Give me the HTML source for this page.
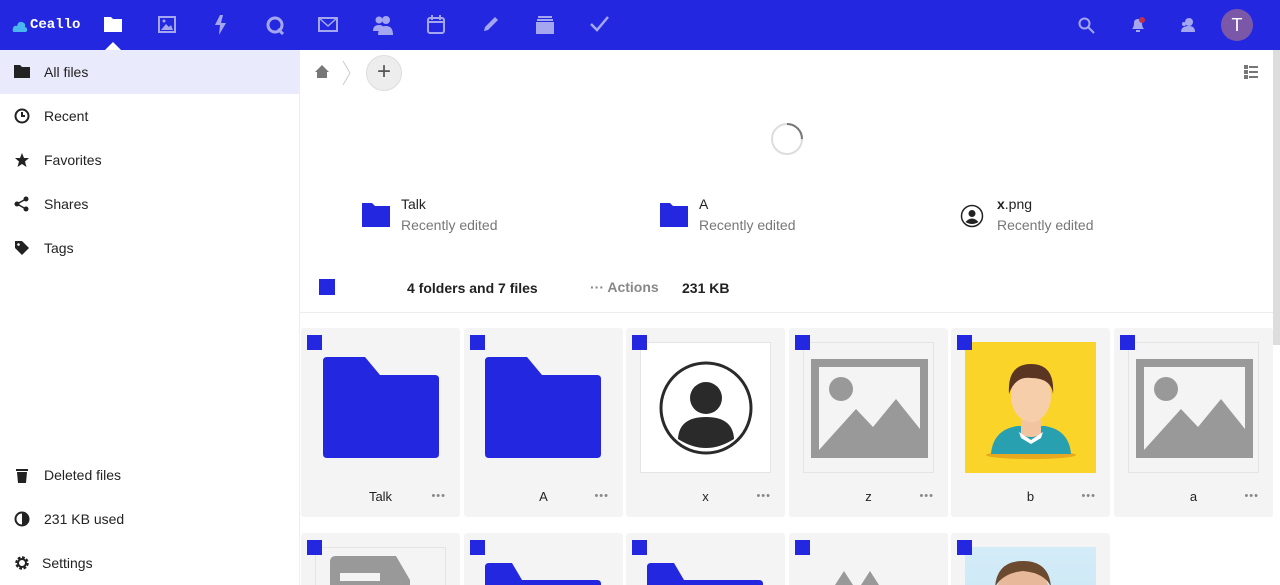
<!DOCTYPE html>
<html style="height:585px;overflow:hidden"><head><meta charset="utf-8"><style>
*{box-sizing:border-box;margin:0;padding:0}
body{width:1280px;height:585px;overflow:hidden;font-family:"Liberation Sans",sans-serif;background:#fff;position:relative;color:#222}
.top{position:absolute;left:0;top:0;width:1280px;height:50px;background:#2328e0}
.abs{position:absolute}
.side{position:absolute;left:0;top:50px;width:300px;height:535px;border-right:1px solid #ededed;background:#fff}
.item{position:absolute;left:0;width:299px;height:44px;font-size:14px;color:#222;display:flex;align-items:center;padding-left:44px}
.item svg{position:absolute;left:14px;top:14px}
.card{position:absolute;width:159px;height:189px;background:#f4f4f4;border-radius:3px}
.chk{position:absolute;left:6px;top:7px;width:15px;height:15px;background:#2328e0;z-index:5}
.name{position:absolute;left:0;width:159px;top:161px;text-align:center;font-size:13px;color:#222}
.dots{position:absolute;right:14px;top:166px;font-size:11px;color:#888;letter-spacing:1px;line-height:4px}
.thumb{position:absolute;left:14px;top:14px;width:131px;height:131px;border:1px solid #e4e4e4;background:#fff}
.grey{color:#777}
</style></head><body>
<div class="top">
  <svg class="abs" style="left:12px;top:19px" width="16" height="14"><path d="M2 13 Q0 13 1 9 Q2 6 5 7 Q6 2 10 3 Q14 4 13 8 Q16 9 15 12 L14 13Z" fill="#4ab6f0"/></svg>
  <div class="abs" style="left:30px;top:17px;color:#fff;font-family:'Liberation Mono',monospace;font-size:14px;font-weight:bold">Ceallo</div>
  <svg class="abs" style="left:104px;top:17px" width="18" height="15"><path d="M0 0H7L9 2H18V15H0Z" fill="#fff"/></svg>
  <div class="abs" style="left:105px;top:42px;width:0;height:0;border-left:8px solid transparent;border-right:8px solid transparent;border-bottom:8px solid #fff"></div>
  <svg class="abs" style="left:158px;top:16px" width="18" height="17"><rect x="1" y="1" width="16" height="15" fill="none" stroke="#a4a7f0" stroke-width="2"/><path d="M3 14 L8 8 L11 11 L13 9 L15 14Z" fill="#a4a7f0"/><circle cx="6" cy="5" r="1.5" fill="#a4a7f0"/></svg>
  <svg class="abs" style="left:214px;top:15px" width="14" height="20"><path d="M6 0 L1 10 H6 L5 20 L12 8 H7 L9 0Z" fill="#a4a7f0"/></svg>
  <svg class="abs" style="left:265px;top:15px" width="20" height="20"><circle cx="10" cy="10" r="7" fill="none" stroke="#a4a7f0" stroke-width="3"/><path d="M13 14 L18 19" stroke="#a4a7f0" stroke-width="3"/></svg>
  <svg class="abs" style="left:318px;top:17px" width="20" height="15"><rect x="1" y="1" width="18" height="13" fill="none" stroke="#a4a7f0" stroke-width="2"/><path d="M1 1 L10 9 L19 1" fill="none" stroke="#a4a7f0" stroke-width="1.5"/></svg>
  <svg class="abs" style="left:372px;top:15px" width="22" height="20"><circle cx="7" cy="5" r="3.5" fill="#a4a7f0"/><circle cx="14" cy="5" r="4" fill="#a4a7f0"/><path d="M1 16 Q1 10 7 10 Q13 10 13 16Z M6 20 Q6 11 14 11 Q21 11 21 20Z" fill="#a4a7f0"/></svg>
  <svg class="abs" style="left:427px;top:15px" width="18" height="19"><rect x="1" y="3" width="16" height="15" rx="2" fill="none" stroke="#a4a7f0" stroke-width="2"/><path d="M1 7H17" stroke="#a4a7f0" stroke-width="2"/><path d="M5 0V5M13 0V5" stroke="#a4a7f0" stroke-width="2"/></svg>
  <svg class="abs" style="left:483px;top:16px" width="16" height="16"><path d="M1 15 L2 11 L12 1 L15 4 L5 14Z" fill="#a4a7f0"/></svg>
  <svg class="abs" style="left:536px;top:15px" width="18" height="19"><rect x="0" y="7" width="18" height="12" fill="#a4a7f0"/><rect x="1" y="4" width="16" height="2" fill="#a4a7f0"/><rect x="2" y="1" width="14" height="2" fill="#a4a7f0"/></svg>
  <svg class="abs" style="left:590px;top:16px" width="19" height="16"><path d="M1 8 L7 14 L18 1" fill="none" stroke="#a4a7f0" stroke-width="2.5"/></svg>
  <svg class="abs" style="left:1078px;top:17px" width="17" height="17"><circle cx="6.5" cy="6.5" r="5" fill="none" stroke="#a4a7f0" stroke-width="2"/><path d="M10 10 L16 16" stroke="#a4a7f0" stroke-width="2"/></svg>
  <svg class="abs" style="left:1130px;top:17px" width="16" height="15"><path d="M2 12 Q4 10 4 6 Q4 2 8 2 Q12 2 12 6 Q12 10 14 12Z" fill="#a4a7f0"/><rect x="6" y="13" width="4" height="2" fill="#a4a7f0"/><circle cx="12" cy="3" r="3" fill="#c0304a"/></svg>
  <svg class="abs" style="left:1180px;top:17px" width="15" height="15"><circle cx="9" cy="5" r="4" fill="#a4a7f0"/><path d="M1 15 Q1 9 9 9 Q15 9 15 15Z" fill="#a4a7f0"/><circle cx="4" cy="7" r="2" fill="#a4a7f0"/></svg>
  <div class="abs" style="left:1221px;top:9px;width:32px;height:32px;border-radius:50%;background:#7b57a8;color:#fff;font-size:18px;text-align:center;line-height:32px">T</div>
</div>

<div class="side">
  <div class="item" style="top:0;background:#e9eafc"><svg width="16" height="14"><path d="M0 1H6L8 3H16V14H0Z" fill="#222"/></svg>All files</div>
  <div class="item" style="top:44px"><svg width="16" height="16"><circle cx="8" cy="8" r="6.5" fill="none" stroke="#222" stroke-width="2"/><path d="M8 4V8H11" fill="none" stroke="#222" stroke-width="2"/></svg>Recent</div>
  <div class="item" style="top:88px"><svg width="16" height="16"><path d="M8 1 L10 6 H15 L11 9.5 L12.5 15 L8 12 L3.5 15 L5 9.5 L1 6 H6Z" fill="#222"/></svg>Favorites</div>
  <div class="item" style="top:132px"><svg width="16" height="16"><circle cx="12" cy="3" r="2.5" fill="#222"/><circle cx="3" cy="8" r="2.5" fill="#222"/><circle cx="12" cy="13" r="2.5" fill="#222"/><path d="M12 3L3 8L12 13" fill="none" stroke="#222" stroke-width="1.5"/></svg>Shares</div>
  <div class="item" style="top:176px"><svg width="16" height="16"><path d="M1 1H8L15 8L8 15L1 8Z" fill="#222"/><circle cx="4.5" cy="4.5" r="1.3" fill="#fff"/></svg>Tags</div>
  <div class="item" style="top:403px"><svg width="16" height="16"><rect x="2" y="2" width="12" height="2" fill="#222"/><path d="M3 5H13L12 16H4Z" fill="#222"/></svg>Deleted files</div>
  <div class="item" style="top:447px"><svg width="16" height="16"><circle cx="8" cy="8" r="6.5" fill="none" stroke="#222" stroke-width="2"/><path d="M8 1.5A6.5 6.5 0 0 1 8 14.5Z" fill="#222"/></svg>231 KB used</div>
  <div class="item" style="top:491px;padding-left:42px"><svg width="16" height="16"><circle cx="8" cy="8" r="5" fill="none" stroke="#222" stroke-width="3.5" stroke-dasharray="2.5 1.4"/><circle cx="8" cy="8" r="4" fill="none" stroke="#222" stroke-width="2"/></svg>Settings</div>
</div>

<div class="abs" style="left:1273px;top:50px;width:7px;height:295px;background:#ddd"></div>
<svg class="abs" style="left:314px;top:64px" width="16" height="15"><path d="M8 1 L15 8 H13 V14 H3 V8 H1Z" fill="#777"/></svg>
<svg class="abs" style="left:342px;top:60px" width="10" height="26"><path d="M1 1 L8 13 L1 25" fill="none" stroke="#ccc" stroke-width="1"/></svg>
<div class="abs" style="left:366px;top:55px;width:36px;height:36px;border-radius:50%;background:#ededed;border:1px solid #ddd;text-align:center;line-height:32px;font-size:24px;color:#555">+</div>
<svg class="abs" style="left:1244px;top:65px" width="14" height="14"><rect x="0" y="0" width="4" height="4" fill="#777"/><rect x="0" y="5" width="4" height="4" fill="#777"/><rect x="0" y="10" width="4" height="4" fill="#777"/><rect x="5" y="1" width="9" height="2" fill="#777"/><rect x="5" y="6" width="9" height="2" fill="#777"/><rect x="5" y="11" width="9" height="2" fill="#777"/></svg>
<svg class="abs" style="left:770px;top:122px" width="34" height="34"><circle cx="17" cy="17" r="15" fill="none" stroke="#ddd" stroke-width="2"/><path d="M17 2 A15 15 0 0 1 32 17" fill="none" stroke="#777" stroke-width="2"/></svg>

<svg class="abs" style="left:362px;top:203px" width="28" height="24"><path d="M0 0H10L13 3H28V24H0Z" fill="#2328e0"/></svg>
<div class="abs" style="left:401px;top:196px;font-size:14px">Talk</div>
<div class="abs grey" style="left:401px;top:217px;font-size:14px">Recently edited</div>
<svg class="abs" style="left:660px;top:203px" width="28" height="24"><path d="M0 0H10L13 3H28V24H0Z" fill="#2328e0"/></svg>
<div class="abs" style="left:699px;top:196px;font-size:14px">A</div>
<div class="abs grey" style="left:699px;top:217px;font-size:14px">Recently edited</div>
<svg class="abs" style="left:960px;top:204px" width="24" height="24"><circle cx="12" cy="12" r="10.5" fill="#fff" stroke="#222" stroke-width="1.5"/><circle cx="12" cy="9.5" r="3.5" fill="#222"/><path d="M5.5 18 Q12 11 18.5 18 Q12 22 5.5 18Z" fill="#222"/></svg>
<div class="abs" style="left:997px;top:196px;font-size:14px"><b>x</b>.png</div>
<div class="abs grey" style="left:997px;top:217px;font-size:14px">Recently edited</div>

<div class="abs" style="left:319px;top:279px;width:16px;height:16px;background:#2328e0"></div>
<div class="abs" style="left:407px;top:280px;font-size:14px;font-weight:bold">4 folders and 7 files</div>
<div class="abs" style="left:590px;top:279px;font-size:14px;font-weight:bold;color:#888">··· Actions</div>
<div class="abs" style="left:682px;top:280px;font-size:14px;font-weight:bold">231 KB</div>
<div class="abs" style="left:300px;top:312px;width:973px;height:1px;background:#ededed"></div>

<div class="card" style="left:301px;top:328px"><div class="chk"></div><svg class="abs" style="left:22px;top:29px" width="116" height="101"><path d="M4 0H42L57 18H112Q116 18 116 22V97Q116 101 112 101H4Q0 101 0 97V4Q0 0 4 0Z" fill="#2328e0"/></svg><div class="name">Talk</div><div class="dots">•••</div></div>
<div class="card" style="left:464px;top:328px"><div class="chk"></div><svg class="abs" style="left:21px;top:29px" width="116" height="101"><path d="M4 0H42L57 18H112Q116 18 116 22V97Q116 101 112 101H4Q0 101 0 97V4Q0 0 4 0Z" fill="#2328e0"/></svg><div class="name">A</div><div class="dots">•••</div></div>
<div class="card" style="left:626px;top:328px"><div class="chk"></div><div class="thumb"><svg class="abs" style="left:18px;top:18px" width="94" height="94"><circle cx="47" cy="47" r="45" fill="#fff" stroke="#2a2a2a" stroke-width="3"/><circle cx="47" cy="37" r="16" fill="#2a2a2a"/><path d="M19 78 Q20 56 47 56 Q74 56 75 78 Q47 96 19 78Z" fill="#2a2a2a"/></svg></div><div class="name">x</div><div class="dots">•••</div></div>
<div class="card" style="left:789px;top:328px"><div class="chk"></div><div class="thumb" style="background:#f4f4f4"><svg class="abs" style="left:7px;top:16px" width="117" height="99"><rect x="4" y="4" width="109" height="91" fill="none" stroke="#999" stroke-width="8"/><circle cx="30" cy="30" r="12" fill="#999"/><path d="M8 91 L45 50 L62 68 L85 40 L109 70 V91Z" fill="#999"/></svg></div><div class="name">z</div><div class="dots">•••</div></div>
<div class="card" style="left:951px;top:328px"><div class="chk"></div><div class="thumb" style="background:#fbd42a;border:none"><svg class="abs" width="131" height="131"><ellipse cx="66" cy="113" rx="45" ry="4" fill="#e8a820"/><path d="M26 112 Q28 88 52 84 H80 Q104 88 106 112Z" fill="#28a0b0"/><path d="M56 78 H76 V92 Q66 98 56 92Z" fill="#f3c4a0"/><ellipse cx="66" cy="54" rx="20" ry="26" fill="#f6cfaa"/><path d="M44 52 Q42 22 66 22 Q90 22 88 52 Q86 36 66 36 Q50 34 44 52Z" fill="#5a3522"/><path d="M54 90 L66 98 L78 90 L76 96 L66 102 L56 96Z" fill="#fff"/></svg></div><div class="name">b</div><div class="dots">•••</div></div>
<div class="card" style="left:1114px;top:328px"><div class="chk"></div><div class="thumb" style="background:#f4f4f4"><svg class="abs" style="left:7px;top:16px" width="117" height="99"><rect x="4" y="4" width="109" height="91" fill="none" stroke="#999" stroke-width="8"/><circle cx="30" cy="30" r="12" fill="#999"/><path d="M8 91 L45 50 L62 68 L85 40 L109 70 V91Z" fill="#999"/></svg></div><div class="name">a</div><div class="dots">•••</div></div>

<div class="card" style="left:301px;top:533px"><div class="chk"></div><div class="thumb" style="background:#f4f4f4"><svg class="abs" style="left:14px;top:8px" width="80" height="50"><path d="M6 0H66L80 24V50H0V6Q0 0 6 0Z" fill="#999"/><rect x="10" y="17" width="40" height="8" fill="#f4f4f4"/></svg></div></div>
<div class="card" style="left:464px;top:533px"><div class="chk"></div><svg class="abs" style="left:21px;top:30px" width="116" height="30"><path d="M4 0H27L37 17H112Q116 17 116 21V30H0V4Q0 0 4 0Z" fill="#2328e0"/></svg></div>
<div class="card" style="left:626px;top:533px"><div class="chk"></div><svg class="abs" style="left:21px;top:30px" width="116" height="30"><path d="M4 0H27L37 17H112Q116 17 116 21V30H0V4Q0 0 4 0Z" fill="#2328e0"/></svg></div>
<div class="card" style="left:789px;top:533px"><div class="chk"></div><svg class="abs" style="left:46px;top:38px" width="60" height="20"><path d="M0 14 L9 0 L18 14Z M26 14 L35 0 L44 14Z" fill="#999"/></svg></div>
<div class="card" style="left:951px;top:533px"><div class="chk"></div><div class="thumb" style="background:linear-gradient(#d4ecf8,#c2e2f2);border:none"><svg class="abs" width="131" height="60"><ellipse cx="58" cy="50" rx="27" ry="32" fill="#e8b89a"/><path d="M30 40 Q32 14 58 14 Q84 14 86 40 Q80 26 58 24 Q38 26 30 40Z" fill="#6b4a30"/></svg></div></div>
</body></html>
